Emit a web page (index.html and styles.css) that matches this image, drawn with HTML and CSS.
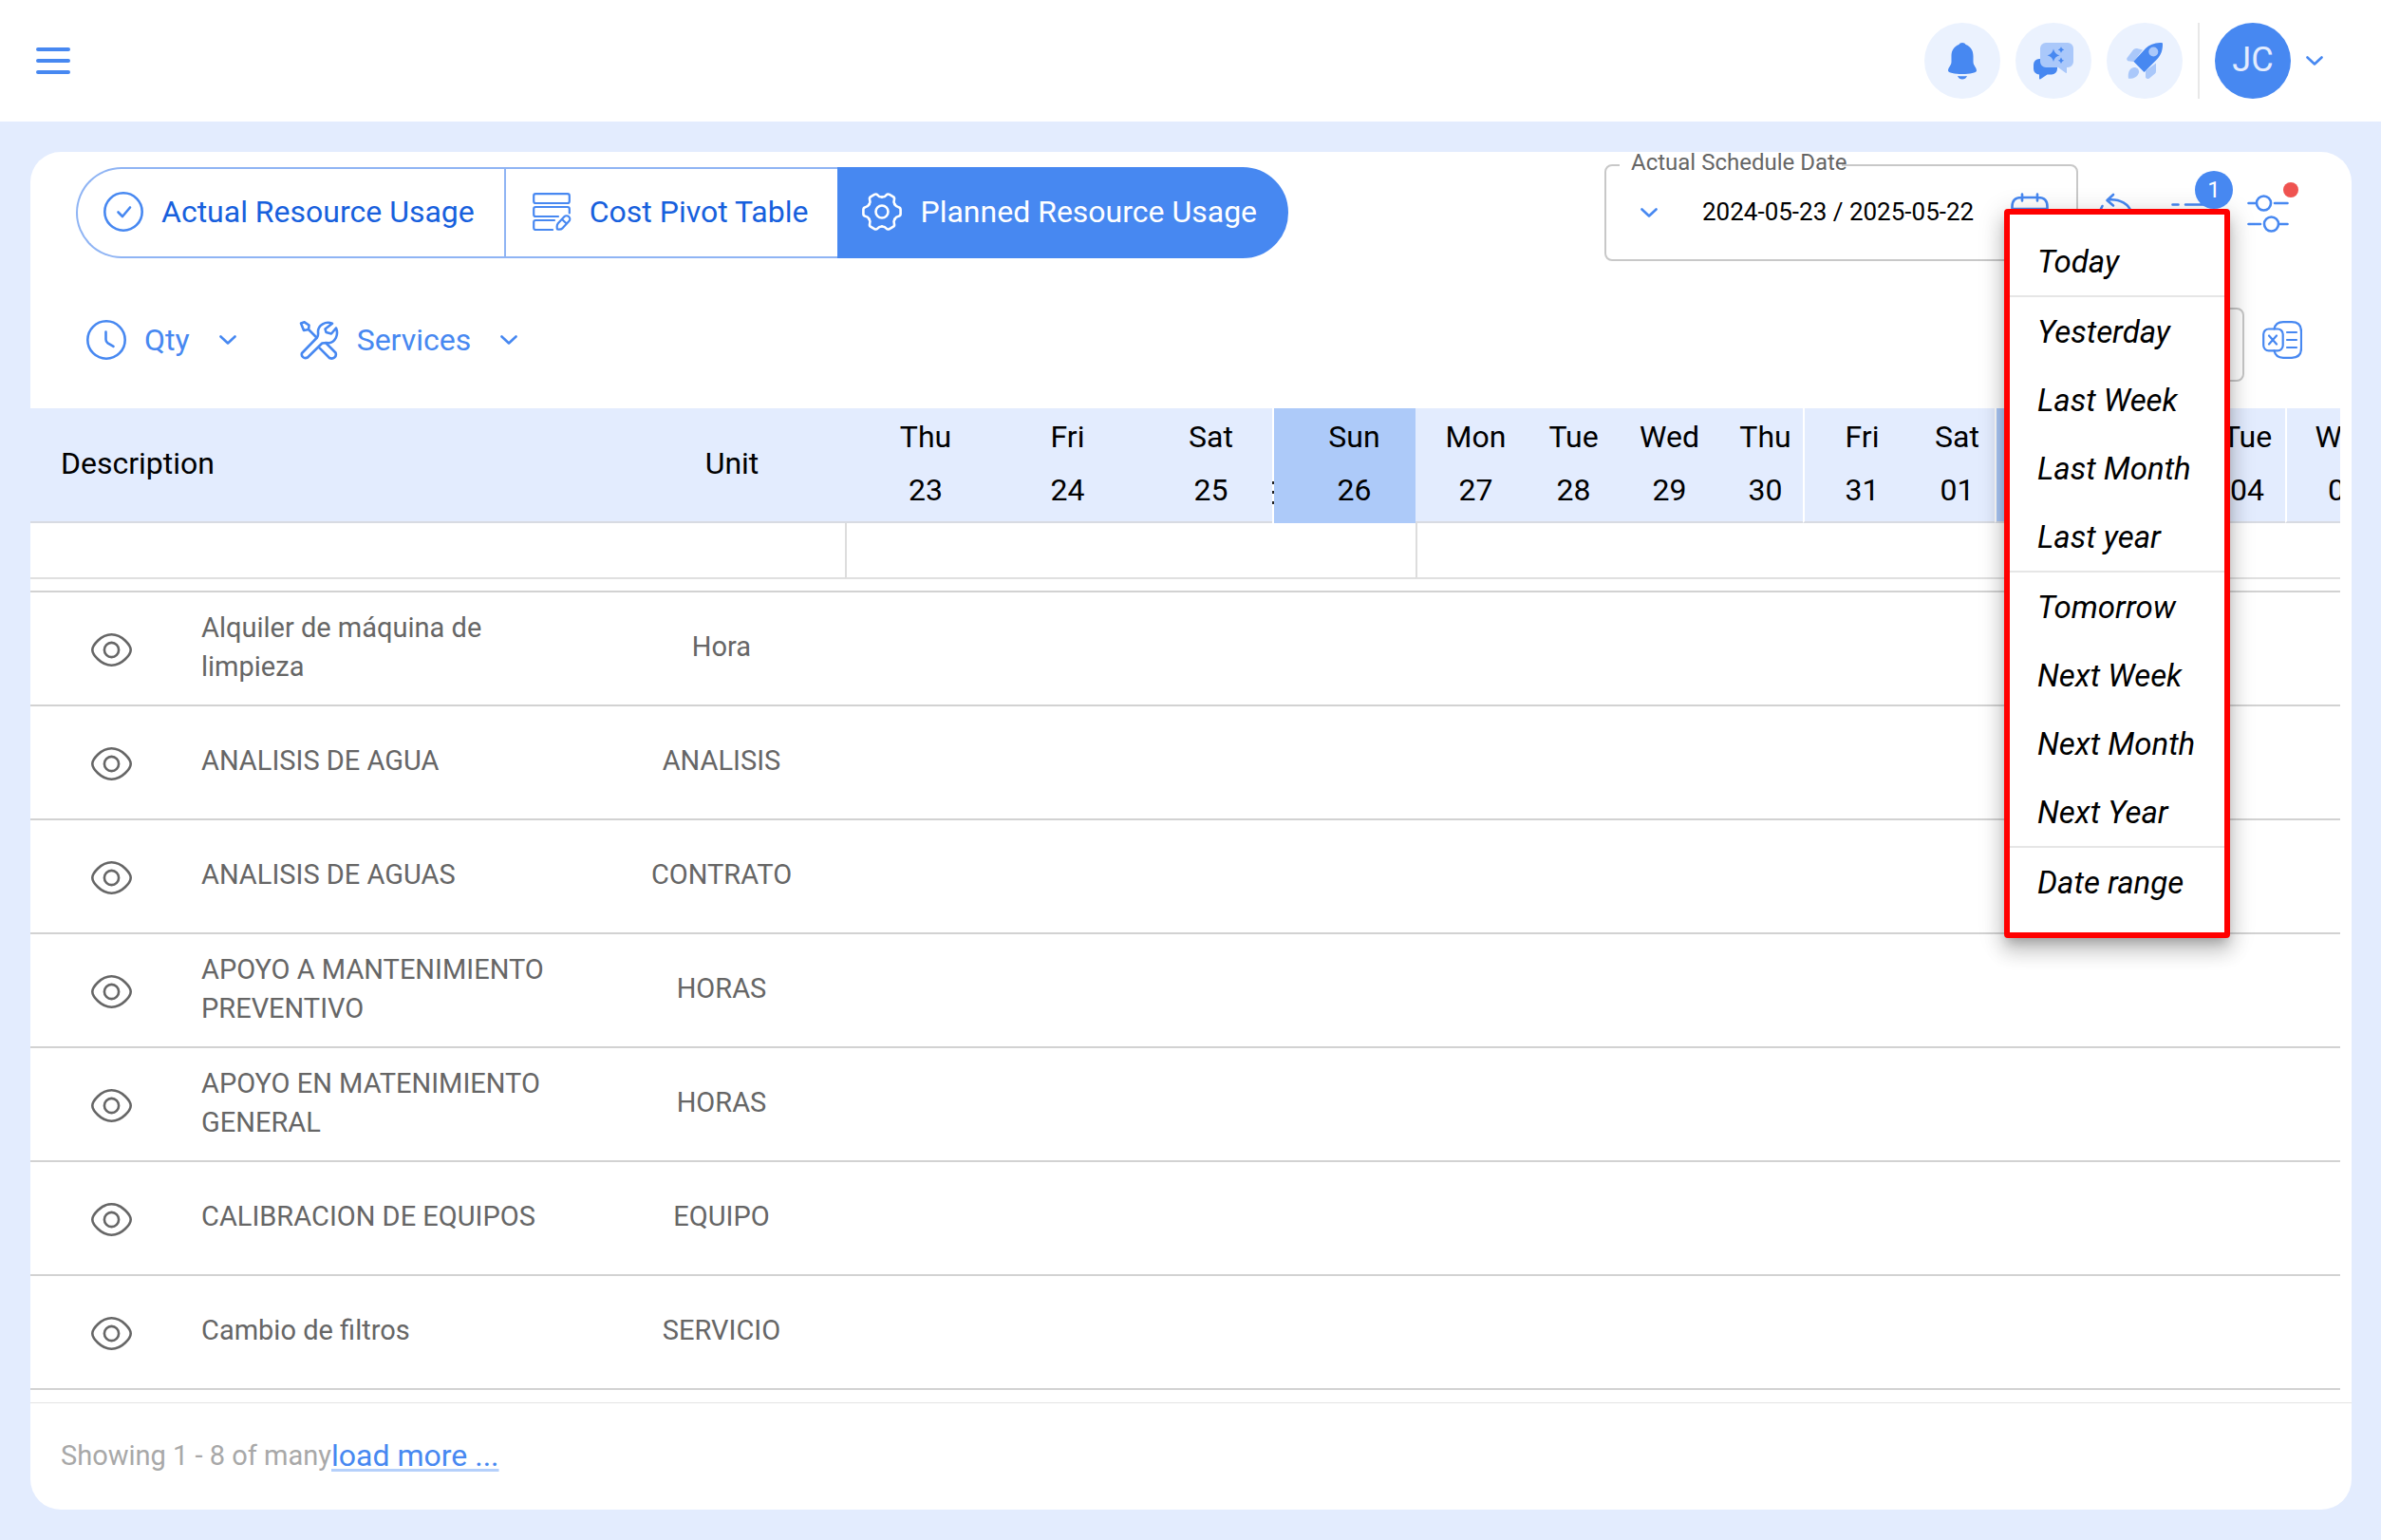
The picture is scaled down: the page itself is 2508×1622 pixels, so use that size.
FILE: index.html
```html
<!DOCTYPE html>
<html lang="en">
<head>
<meta charset="UTF-8">
<title>Planned Resource Usage</title>
<link rel="stylesheet" href="styles.css">
</head>
<body>

<!-- shared icons -->
<svg class="defs" aria-hidden="true">
  <symbol id="chevron" viewBox="0 0 18 10"><path d="M1.5 1.5 9 8.5l7.5-7"/></symbol>
  <symbol id="eye" viewBox="0 0 43 35">
    <path d="M1.3 17.5C1.3 13 10 1.3 21.5 1.3S41.7 13 41.7 17.5 33 33.7 21.5 33.7 1.3 22 1.3 17.5z"/>
    <circle cx="21.5" cy="17.5" r="7.6"/>
  </symbol>
</svg>

<header class="topbar">
  <button class="menu-toggle" aria-label="Menu"><span></span><span></span><span></span></button>
  <div class="topbar-actions">
    <button class="round" aria-label="Notifications">
      <svg width="30" height="39" viewBox="0 0 30 39">
        <path class="solid" d="M15 0c1.8 0 3 .9 3.6 2C24 4 26.500 8.500 26.500 14v6c0 4 3.500 6 3.500 9.500 0 2.300-7 3.500-15 3.500S0 31.800 0 29.500C0 26 3.500 24 3.500 20v-6c0-5.500 2.500-10 7.900-12C12 .9 13.200 0 15 0zM10 35q5 .7 10 0-1.500 3.500-5 3.500T10 35z"/>
      </svg>
    </button>
    <button class="round" aria-label="Assistant">
      <svg width="42" height="39" viewBox="0 0 42 39">
        <path class="solid" d="M6 17h13a6 6 0 0 1 6 6v4.500a6 6 0 0 1-6 6h-4.500L7 38.500q-1 .3-1-1v-4a6 6 0 0 1-6-6V23a6 6 0 0 1 6-6z"/>
        <path class="pale" d="M13 0h23a6 6 0 0 1 6 6v14a6 6 0 0 1-6 6h-1v5q0 1.300-1.200.7L26 26H13a6 6 0 0 1-6-6V6a6 6 0 0 1 6-6z"/>
        <path class="solid" d="M21 6.500q1.300 5.500 6.500 6.800-5.200 1.300-6.500 6.800-1.300-5.500-6.500-6.800Q19.700 12 21 6.500zM29 4.300q.7 2.600 3.200 3.200-2.500.6-3.200 3.200-.7-2.600-3.200-3.200 2.500-.6 3.200-3.200zM29 15.600q.7 2.600 3.200 3.200-2.500.6-3.200 3.200-.7-2.600-3.200-3.200 2.500-.6 3.200-3.200z"/>
      </svg>
    </button>
    <button class="round" aria-label="Launch">
      <svg width="39" height="39" viewBox="0 0 39 39">
        <path class="pale" d="M17 7.500 11 6Q8.500 5.500 7 7.500L.5 16q-1 2 1 3.300l6 .7zM20 29.500l11-8v8.500q0 1.500-1 2.500l-6 5q-2.500 1.500-4-1zM2 37.800C1 32 3 27 7.500 26c4-.5 6.500 3 5.300 6C11.500 36 7 38.300 2 37.800z"/>
        <path class="solid" d="M37 0q1 0 1 1.200C38.200 8 36 13.500 32 17.500L18.500 31 7.400 19.700 20 6C24 2 30-.2 37 0z"/>
        <circle class="pale" cx="28.300" cy="9.500" r="5"/>
      </svg>
    </button>
    <span class="divider"></span>
    <button class="avatar">JC</button>
    <svg class="icon" width="18" height="10"><use href="#chevron"/></svg>
  </div>
</header>

<main>
<section class="panel">

  <div class="toolbar">
    <div class="tabs">
      <button class="tab">
        <svg class="icon" width="42" height="42"><circle cx="21" cy="21" r="19.700"/><path d="m15.500 21.500 4.500 4.500 8-9.500"/></svg>
        Actual Resource Usage
      </button>
      <button class="tab">
        <svg class="icon thin" width="42" height="40" viewBox="0 0 40 40">
          <rect x="1.200" y="1.200" width="37.600" height="9.800" rx="2"/>
          <path d="M38.800 21.500V17q0-2-2-2H3.200q-2 0-2 2v6q0 2 2 2H27M23 29H3.200q-2 0-2 2v6q0 2 2 2H21M26 38.500q-1-4 .8-6.200l6.500-7a3.400 3.400 0 0 1 5 4.800l-6.500 7q-2 2-5.800 1.400zM31 28l4.500 4.200"/>
        </svg>
        Cost Pivot Table
      </button>
      <button class="tab active">
        <svg class="icon" width="42" height="42" viewBox="-21 -21 42 42">
          <path id="tooth" d="M13.400-7.800C14.500-5.600 16-5 17.500-4.800q2.100.5 2.100 2.600v4.400q0 2.100-2.100 2.600C16 5 14.500 5.600 13.400 7.800"/>
          <use href="#tooth" transform="rotate(60)"/>
          <use href="#tooth" transform="rotate(120)"/>
          <use href="#tooth" transform="rotate(180)"/>
          <use href="#tooth" transform="rotate(240)"/>
          <use href="#tooth" transform="rotate(300)"/>
          <circle r="6.500"/>
        </svg>
        Planned Resource Usage
      </button>
    </div>

    <div class="toolbar-right">
      <div class="field date-field">
        <label for="schedule-date">Actual Schedule Date</label>
        <svg class="icon" width="18" height="10"><use href="#chevron"/></svg>
        <input id="schedule-date" type="text" value="2024-05-23 / 2025-05-22" readonly>
        <button class="plain" aria-label="Pick a date">
          <svg class="icon" width="40" height="42" viewBox="0 0 40 42"><path d="M11 5h18q9.500 0 9.500 9.500v16q0 9.500-9.500 9.500H11q-9.500 0-9.500-9.500v-16Q1.500 5 11 5zM1.500 17h37M12 1.500v7M28 1.500v7"/></svg>
        </button>
      </div>
      <button class="plain" aria-label="Undo">
        <svg class="icon" width="40" height="42" viewBox="0 0 40 42"><path d="M17 2l-6.500 6 6.500 5.500M11 7.500C24 6 34 12 36.500 22M3 19l2.500-5"/></svg>
      </button>
      <button class="plain" aria-label="Grouping">
        <svg class="icon" width="42" height="42" viewBox="0 0 42 42"><path d="M1.500 12.500h6M15 12.500h25M1.500 29h6M15 29h25"/></svg>
        <span class="badge">1</span>
      </button>
      <button class="plain" aria-label="Filters">
        <svg class="icon" width="44" height="42" viewBox="0 1 44 42"><path d="M1.500 12H9M29 12h13.500M1.500 34H14M34 34h8.500"/><circle cx="17.500" cy="12" r="7.500"/><circle cx="25.500" cy="34" r="7.500"/></svg>
        <span class="dot"></span>
      </button>
    </div>
  </div>

  <div class="subbar">
    <div class="options">
      <button class="option">
        <svg class="icon" width="42" height="42"><circle cx="21" cy="21" r="19.700"/><path d="M20.500 12.500v8q0 2.500 2 3.800l6 3.500"/></svg>
        Qty
        <svg class="icon caret" width="18" height="10"><use href="#chevron"/></svg>
      </button>
      <button class="option">
        <svg class="icon" width="42" height="42" viewBox="-1 -1 42 42">
          <path d="M1 2.500 4.700 1.300 9.500 4.500 9 9l-5 1zM9 9l8.500 8.500"/>
          <path d="M34 2.700C27 0 19 4 19 11.500q.5 4-1 6L2 34c-1 3 2 6.500 6 4.500l15.300-15q3-.6 7.400-.2C37 22 41 15 38 7.500l-5 6-5.500-1.500-1-3.500z"/>
          <path d="M20.700 28.700 31 39c4 2 8-1.500 6.500-5.500L28 24"/>
        </svg>
        Services
        <svg class="icon caret" width="18" height="10"><use href="#chevron"/></svg>
      </button>
    </div>
    <div class="toolbar-right">
      <div class="field search-field"><input type="text" aria-label="Search"></div>
      <button class="plain" aria-label="Export to Excel">
        <svg class="icon thin" width="42" height="40" viewBox="0 0 42 40"><path d="M12.500 8.500Q14 1.200 22 1.200h9q10 0 10 10v17.600q0 10-10 10h-9q-8 0-9.500-7.500M7 15.500l8 9M15 15.500l-8 9M26 12h10M26 20h10M26 28h10"/><rect x="1.200" y="8.500" width="20.500" height="22.800" rx="5.500"/></svg>
      </button>
    </div>
  </div>

  <div class="table-wrap">
  <table>
    <colgroup>
      <col class="c-eye"><col class="c-desc"><col class="c-unit">
      <col class="c-first"><col span="3" class="c-wide">
      <col class="c-mon"><col span="5" class="c-day"><col span="4" class="c-next">
    </colgroup>
    <thead>
      <tr>
        <th colspan="2" class="left">Description</th>
        <th>Unit</th>
        <th>Thu<br>23</th>
        <th>Fri<br>24</th>
        <th>Sat<br>25</th>
        <th class="sunday more">Sun<br>26</th>
        <th>Mon<br>27</th>
        <th>Tue<br>28</th>
        <th>Wed<br>29</th>
        <th>Thu<br>30</th>
        <th class="line">Fri<br>31</th>
        <th>Sat<br>01</th>
        <th class="sunday line">Sun<br>02</th>
        <th>Mon<br>03</th>
        <th>Tue<br>04</th>
        <th class="line">Wed<br>05</th>
      </tr>
    </thead>
    <tbody>
      <tr class="totals"><td colspan="3"></td><td colspan="4"></td><td colspan="10"></td></tr>
      <tr class="spacer"><td colspan="17"></td></tr>
      <tr>
        <td class="eye"><button class="plain" aria-label="View"><svg class="icon" width="43" height="35"><use href="#eye"/></svg></button></td>
        <td class="desc">Alquiler de máquina de limpieza</td><td class="unit">Hora</td><td colspan="14"></td>
      </tr>
      <tr>
        <td class="eye"><button class="plain" aria-label="View"><svg class="icon" width="43" height="35"><use href="#eye"/></svg></button></td>
        <td class="desc">ANALISIS DE AGUA</td><td class="unit">ANALISIS</td><td colspan="14"></td>
      </tr>
      <tr>
        <td class="eye"><button class="plain" aria-label="View"><svg class="icon" width="43" height="35"><use href="#eye"/></svg></button></td>
        <td class="desc">ANALISIS DE AGUAS</td><td class="unit">CONTRATO</td><td colspan="14"></td>
      </tr>
      <tr>
        <td class="eye"><button class="plain" aria-label="View"><svg class="icon" width="43" height="35"><use href="#eye"/></svg></button></td>
        <td class="desc">APOYO A MANTENIMIENTO PREVENTIVO</td><td class="unit">HORAS</td><td colspan="14"></td>
      </tr>
      <tr>
        <td class="eye"><button class="plain" aria-label="View"><svg class="icon" width="43" height="35"><use href="#eye"/></svg></button></td>
        <td class="desc">APOYO EN MATENIMIENTO GENERAL</td><td class="unit">HORAS</td><td colspan="14"></td>
      </tr>
      <tr>
        <td class="eye"><button class="plain" aria-label="View"><svg class="icon" width="43" height="35"><use href="#eye"/></svg></button></td>
        <td class="desc">CALIBRACION DE EQUIPOS</td><td class="unit">EQUIPO</td><td colspan="14"></td>
      </tr>
      <tr>
        <td class="eye"><button class="plain" aria-label="View"><svg class="icon" width="43" height="35"><use href="#eye"/></svg></button></td>
        <td class="desc">Cambio de filtros</td><td class="unit">SERVICIO</td><td colspan="14"></td>
      </tr>
    </tbody>
  </table>
  </div>

  <footer class="table-footer">
    <span>Showing 1 - 8 of many</span><a href="#">load more ...</a>
  </footer>

  <ul class="range-menu">
    <li><button>Today</button></li>
    <li class="sep"><button>Yesterday</button></li>
    <li><button>Last Week</button></li>
    <li><button>Last Month</button></li>
    <li><button>Last year</button></li>
    <li class="sep"><button>Tomorrow</button></li>
    <li><button>Next Week</button></li>
    <li><button>Next Month</button></li>
    <li><button>Next Year</button></li>
    <li class="sep"><button>Date range</button></li>
  </ul>

</section>
</main>

</body>
</html>
```
FILE: styles.css
```css
* {
  box-sizing: border-box;
}

body {
  margin: 0;
  background: #e3ecfe;
  font-family: Roboto, "Liberation Sans", sans-serif;
  font-size: 32px;
  color: #000;
}

button, input {
  font: inherit;
  color: inherit;
  border: 0;
  padding: 0;
  background: none;
}

.defs {
  display: none;
}

svg {
  display: block;
  flex: none;
}

.icon {
  fill: none;
  stroke: currentColor;
  stroke-width: 2.6;
  stroke-linecap: round;
  stroke-linejoin: round;
  color: #4788f1;
}

.icon.thin {
  stroke-width: 2.2;
}

.solid { fill: #4788f1; }
.pale { fill: #aac8fa; }

/* top bar */
.topbar {
  display: flex;
  align-items: center;
  justify-content: space-between;
  height: 128px;
  padding: 0 61px 0 38px;
  background: #fff;
}

.menu-toggle {
  display: flex;
  flex-direction: column;
  gap: 8px;
}

.menu-toggle span {
  width: 36px;
  height: 4px;
  border-radius: 2px;
  background: #4788f1;
}

.topbar-actions {
  display: flex;
  align-items: center;
  gap: 16px;
}

.round, .avatar {
  display: flex;
  align-items: center;
  justify-content: center;
  width: 80px;
  height: 80px;
  border-radius: 50%;
  background: #ebf2fe;
}

.avatar {
  padding-bottom: 3px;
  background: #4788f1;
  color: #e3ecfe;
  font-size: 36px;
}

.divider {
  width: 2px;
  height: 80px;
  background: #e8e8e8;
}

/* panel */
main {
  padding: 32px 31px 32px 32px;
}

.panel {
  position: relative;
  border-radius: 32px;
  background: #fff;
}

.toolbar {
  display: flex;
  justify-content: space-between;
  align-items: center;
  padding: 13px 66px 0 48px;
}

.tabs {
  display: flex;
}

.tab {
  display: flex;
  align-items: center;
  gap: 19px;
  height: 96px;
  padding: 0 31px 2px 27px;
  border: 2px solid #8fb4f4;
  border-right-width: 0;
  color: #1760dd;
  white-space: nowrap;
}

.tab:first-child {
  border-radius: 48px 0 0 48px;
}

.tab.active {
  padding-left: 24px;
  border-color: #4788f1;
  border-right-width: 2px;
  border-radius: 0 48px 48px 0;
  background: #4788f1;
  color: #fff;
}

.tab.active .icon {
  color: #fff;
}

.toolbar-right {
  display: flex;
  align-items: center;
}

.toolbar .toolbar-right {
  gap: 38px;
}

.subbar .toolbar-right {
  gap: 19px;
}

.plain {
  position: relative;
}

.field {
  position: relative;
  display: flex;
  align-items: center;
  border: 2px solid #c8c8c8;
  border-radius: 8px;
}

.date-field {
  height: 102px;
  padding: 0 29px 0 36px;
  margin-right: -18px;
}

.date-field input {
  width: 325px;
  margin-left: 47px;
  padding-bottom: 2px;
  font-size: 26px;
}

.date-field label {
  position: absolute;
  top: -16px;
  left: 14px;
  padding-left: 12px;
  font-size: 24px;
  line-height: 24px;
  color: #666;
  background: linear-gradient(#fff, #fff) no-repeat 0 100% / 234px 20px;
}

.search-field {
  width: 240px;
  height: 78px;
  margin-top: 10px;
}

.search-field input {
  width: 100%;
  padding: 0 16px;
}

.badge {
  position: absolute;
  z-index: 2;
  top: -23px;
  right: -23px;
  width: 40px;
  border-radius: 50%;
  background: #4788f1;
  color: #fff;
  font-size: 24px;
  line-height: 40px;
  text-align: center;
}

.dot {
  position: absolute;
  top: -11px;
  right: -10px;
  width: 16px;
  height: 16px;
  border-radius: 50%;
  background: #ef5350;
}

.subbar {
  display: flex;
  justify-content: space-between;
  align-items: center;
  padding: 39px 52px 28px 48px;
}

.options {
  display: flex;
  gap: 44px;
}

.option {
  display: flex;
  align-items: center;
  gap: 19px;
  padding: 0 11px 1px;
  color: #4788f1;
}

.option .caret {
  margin-left: 12px;
}

/* table */
.table-wrap {
  overflow: hidden;
  margin-right: 12px;
}

table {
  table-layout: fixed;
  width: 2477px;
  border-spacing: 0;
}

.c-eye { width: 180px; }
.c-desc { width: 418px; }
.c-unit { width: 260px; }
.c-first { width: 148px; }
.c-wide { width: 151px; }
.c-mon { width: 105px; }
.c-day { width: 101px; }
.c-next { width: 102px; }

th {
  height: 121px;
  padding: 0 0 3px 22px;
  border-bottom: 2px solid #d8dbe2;
  background: #e3ecfe;
  font-weight: normal;
  line-height: 56px;
}

th.left {
  padding-left: 32px;
  text-align: left;
}

th.sunday {
  background: #adcaf9;
}

th.line {
  border-left: 2px solid #fff;
}

/* overflow mark left of the cell */
th.more {
  padding-left: 20px;
  padding-bottom: 5px;
  border-left: 2px solid #fff;
  border-image: linear-gradient(#fff 77px, #222 77px, #222 80px, #fff 80px, #fff 87px, #222 87px, #222 90px, #fff 90px, #fff 97px, #222 97px, #222 100px, #fff 100px) 1;
  border-bottom: 0;
}

td {
  height: 120px;
  padding: 0 0 3px;
  border-bottom: 2px solid #d2d2d2;
  color: #666;
  font-size: 29px;
  line-height: 41px;
}

.totals td {
  height: 59px;
  border-bottom-color: #e0e0e0;
}

.totals td + td {
  border-left: 2px solid #ddd;
}

.spacer td {
  height: 14px;
}

td.eye {
  padding: 2px 0 0 64px;
}

.eye .plain {
  display: block;
}

.eye .icon {
  color: #666;
}

td.desc {
  padding-right: 48px;
}

td.unit {
  text-align: center;
}

.table-footer {
  display: flex;
  align-items: center;
  height: 113px;
  margin-top: 13px;
  padding: 0 32px 3px;
  border-top: 1px solid #e4e4e4;
  color: #a8a8a8;
  font-size: 29px;
}

.table-footer a {
  color: #4788f1;
  font-size: 32px;
  text-decoration: underline 3px #b5d0fb;
  text-underline-offset: 3px;
}

/* date range menu */
.range-menu {
  position: absolute;
  z-index: 1;
  top: 60px;
  right: 128px;
  min-width: 238px;
  margin: 0;
  padding: 13px 0 17px;
  border: 6px solid #f00;
  border-radius: 4px;
  background: #fff;
  list-style: none;
  box-shadow: 0 8px 10px -4px rgba(0, 0, 0, .2), 0 14px 20px 2px rgba(0, 0, 0, .14), 0 5px 26px 4px rgba(0, 0, 0, .12);
}

.range-menu button {
  width: 100%;
  height: 72px;
  padding: 0 29px;
  font-size: 33px;
  font-style: italic;
  text-align: left;
}

.range-menu .sep {
  border-top: 2px solid #e6e6e6;
}
```
